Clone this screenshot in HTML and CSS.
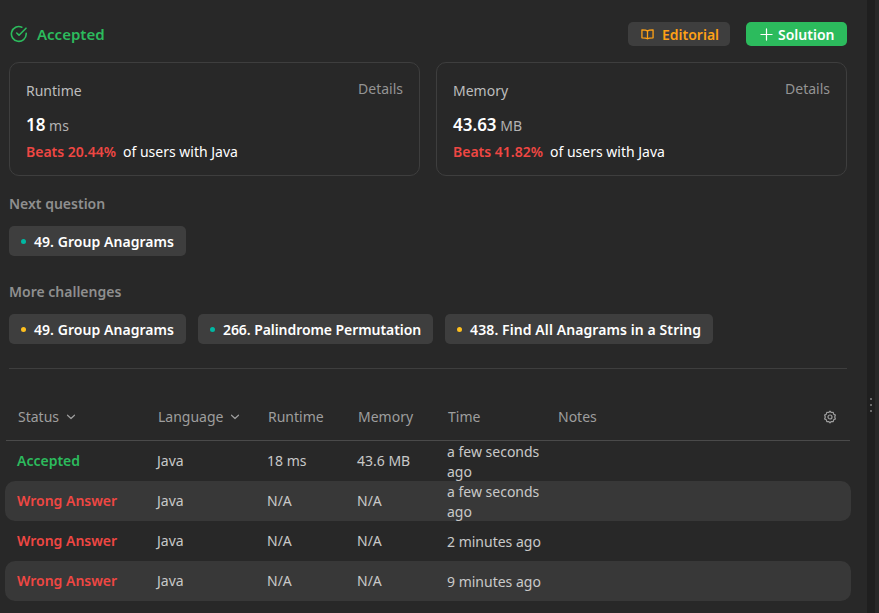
FILE: index.html
```html
<!DOCTYPE html>
<html lang="en">
<head>
<meta charset="utf-8">
<title>Submission result</title>
<link rel="stylesheet" href="styles.css">
</head>
<body>
<div class="app">
  <main class="panel">
    <header class="top">
      <div class="verdict">
        <svg class="check" viewBox="0 0 18 18" fill="none" stroke="currentColor" stroke-width="1.6" stroke-linecap="round" stroke-linejoin="round"><path d="M16.2 8.3v.7a7.4 7.4 0 1 1-4.4-6.8"/><path d="M16 3.2 9 10.2 6.7 8"/></svg>
        <span>Accepted</span>
      </div>
      <div class="actions">
        <button class="btn btn-editorial">
          <svg class="book" viewBox="0 0 14 14" fill="none" stroke="currentColor" stroke-width="1.4" stroke-linejoin="round"><path d="M7 3.2C6 2.3 4.2 2 1 2v8.600c3.200 0 5 .2 6 1.100 1-.9 2.800-1.100 6-1.100V2C9.800 2 8 2.300 7 3.200z"/><path d="M7 3.200v8.500"/></svg>
          Editorial
        </button>
        <button class="btn btn-solution">
          <svg class="plus" viewBox="0 0 14 14" fill="none" stroke="currentColor" stroke-width="1.3" stroke-linecap="round"><path d="M7 1v12M1 7h12"/></svg>
          Solution
        </button>
      </div>
    </header>

    <section class="cards">
      <article class="card">
        <div class="card-head"><span class="card-title">Runtime</span><span class="details">Details</span></div>
        <div class="value"><strong>18</strong> <span>ms</span></div>
        <div class="beats"><b>Beats 20.44%</b><span>of users with Java</span></div>
      </article>
      <article class="card">
        <div class="card-head"><span class="card-title">Memory</span><span class="details">Details</span></div>
        <div class="value"><strong>43.63</strong> <span>MB</span></div>
        <div class="beats"><b>Beats 41.82%</b><span>of users with Java</span></div>
      </article>
    </section>

    <section class="group group-next">
      <h2>Next question</h2>
      <div class="chips">
        <a class="chip"><i class="dot teal"></i>49. Group Anagrams</a>
      </div>
    </section>

    <section class="group group-more">
      <h2>More challenges</h2>
      <div class="chips">
        <a class="chip"><i class="dot amber"></i>49. Group Anagrams</a>
        <a class="chip tight"><i class="dot teal"></i>266. Palindrome Permutation</a>
        <a class="chip wide"><i class="dot amber"></i>438. Find All Anagrams in a String</a>
      </div>
    </section>

    <hr class="rule">

    <section class="table">
      <div class="row head">
        <span class="cell">Status <svg class="caret" viewBox="0 0 10 6" fill="none" stroke="currentColor" stroke-width="1.200" stroke-linecap="round" stroke-linejoin="round"><path d="M1.500 1.200 5 4.500l3.500-3.300"/></svg></span>
        <span class="cell">Language <svg class="caret" viewBox="0 0 10 6" fill="none" stroke="currentColor" stroke-width="1.200" stroke-linecap="round" stroke-linejoin="round"><path d="M1.500 1.200 5 4.500l3.500-3.300"/></svg></span>
        <span class="cell">Runtime</span>
        <span class="cell">Memory</span>
        <span class="cell">Time</span>
        <span class="cell">Notes</span>
        <span class="cell cog"><svg viewBox="0 0 14 14" fill="none" stroke="currentColor" stroke-width="1.200" stroke-linejoin="round"><path d="M7 1.100 8.300 2.500l1.900-.2.500 1.900 1.700.9-.7 1.900.7 1.900-1.700.9-.5 1.900-1.900-.2L7 12.900l-1.300-1.400-1.900.2-.5-1.900-1.700-.9.700-1.900-.7-1.900 1.700-.9.500-1.900 1.900.2z"/><circle cx="7" cy="7" r="2"/></svg></span>
      </div>
      <div class="row">
        <span class="cell ok">Accepted</span><span class="cell">Java</span><span class="cell">18 ms</span><span class="cell">43.6 MB</span><span class="cell time">a few seconds ago</span><span class="cell"></span><span class="cell"></span>
      </div>
      <div class="row alt">
        <span class="cell bad">Wrong Answer</span><span class="cell">Java</span><span class="cell">N/A</span><span class="cell">N/A</span><span class="cell time">a few seconds ago</span><span class="cell"></span><span class="cell"></span>
      </div>
      <div class="row">
        <span class="cell bad">Wrong Answer</span><span class="cell">Java</span><span class="cell">N/A</span><span class="cell">N/A</span><span class="cell time">2 minutes ago</span><span class="cell"></span><span class="cell"></span>
      </div>
      <div class="row alt">
        <span class="cell bad">Wrong Answer</span><span class="cell">Java</span><span class="cell">N/A</span><span class="cell">N/A</span><span class="cell time">9 minutes ago</span><span class="cell"></span><span class="cell"></span>
      </div>
    </section>
  </main>
  <aside class="gutter"><span class="grip"><i></i><i></i><i></i></span></aside>
  <div class="edge"></div>
</div>
</body>
</html>
```

FILE: styles.css
```css
* { box-sizing: border-box; }
html, body { margin: 0; height: 100%; overflow: hidden; }
body {
  background: #282828;
  color: #eff1f6;
  font-family: "Noto Sans", "Open Sans", "Liberation Sans", sans-serif;
  font-size: 14px;
}
.app { display: flex; height: 613px; }
.panel { width: 867px; flex: none; padding: 22px 20px 0 9px; background: #282828; }
.gutter {
  width: 8px; flex: none; background: #1f1f1f;
  display: flex; justify-content: center; padding-top: 398px;
}
.grip { display: flex; flex-direction: column; gap: 4px; }
.grip i { width: 2px; height: 2px; background: #6a6a6a; display: block; }
.edge { flex: 1; background: #282828; }

.top { display: flex; justify-content: space-between; align-items: center; height: 24px; }
.verdict { display: flex; align-items: center; gap: 9px; color: #2cbb5d; font-size: 15px; font-weight: 600; padding-left: 1px; }
.check { width: 18px; height: 18px; }
.actions { display: flex; gap: 16px; }
.btn {
  display: flex; align-items: center; height: 24px; border: 0; border-radius: 5px;
  font: 600 14px "Noto Sans", "Open Sans", sans-serif; padding: 0 12px;
}
.btn-editorial { background: #3e3e3e; color: #ffa116; gap: 8px; width: 102px; padding: 0 12px 0 13px; }
.btn-solution { background: #2cbb5d; color: #fff; gap: 5px; width: 101px; padding: 0 13px 0 14px; }
.book { width: 13px; height: 13px; flex: none; }
.plus { width: 13px; height: 13px; flex: none; }

.cards { display: grid; grid-template-columns: 1fr 1fr; gap: 16px; margin-top: 16px; }
.card { height: 114px; border: 1px solid #3e3e3e; border-radius: 10px; padding: 16px 16px 0 16px; }
.card-head { display: flex; justify-content: space-between; height: 20px; }
.card-title { color: #bdbdbd; line-height: 24px; }
.details { color: #949494; line-height: 20px; }
.value { margin-top: 14px; height: 24px; line-height: 24px; color: #b3b3b3; }
.value strong { color: #fff; font-size: 17px; font-weight: 600; }
.beats { display: flex; gap: 7px; margin-top: 5px; line-height: 20px; color: #fff; }
.beats b { color: #ef4743; font-weight: 600; }

.group h2 { margin: 0; font-size: 14px; font-weight: 600; color: #8f8f8f; line-height: 20px; }
.group-next { margin-top: 18px; }
.group-more { margin-top: 26px; }
.chips { display: flex; gap: 12px; margin-top: 12px; }
.chip {
  display: flex; align-items: center; height: 30px; padding: 0 12px;
  background: #3e3e3e; border-radius: 5px; color: #fff; font-weight: 600; letter-spacing: 0.05px;
}
.chip.tight { letter-spacing: -0.07px; }
.chip.wide { letter-spacing: 0.09px; }
.dot { width: 5px; height: 5px; border-radius: 50%; margin-right: 8px; }
.teal { background: #00b8a3; }
.amber { background: #ffc01e; }

.rule { border: 0; border-top: 1px solid #3e3e3e; margin: 24px 0 0; }

.table { margin: 0 -4px; padding-top: 28px; }
.row {
  display: grid; grid-template-columns: 140px 110px 90px 90px 110px 1fr 32px;
  grid-template-rows: 40px;
  height: 40px; align-items: center; padding-left: 12px; color: #c9c9c9; border-radius: 10px;
}
.row.head { grid-template-rows: 1fr; height: 44px; color: #9e9e9e; border-bottom: 1px solid #4a4a4a; border-radius: 0; margin: 0 1px; padding: 0 0 4px 12px; }
.cell { line-height: 20px; padding-right: 8px; display: block; }
.time { padding-top: 2px; }
.alt { background: #383838; }
.ok { color: #2cbb5d; font-weight: 600; }
.bad { color: #ef4743; font-weight: 600; }
.caret { width: 10px; height: 6px; margin-left: 3px; vertical-align: 2px; }
.cog { color: #9e9e9e; display: flex; justify-content: flex-end; padding-right: 13px; }
.cog svg { width: 14px; height: 14px; display: block; flex: none; }
```
